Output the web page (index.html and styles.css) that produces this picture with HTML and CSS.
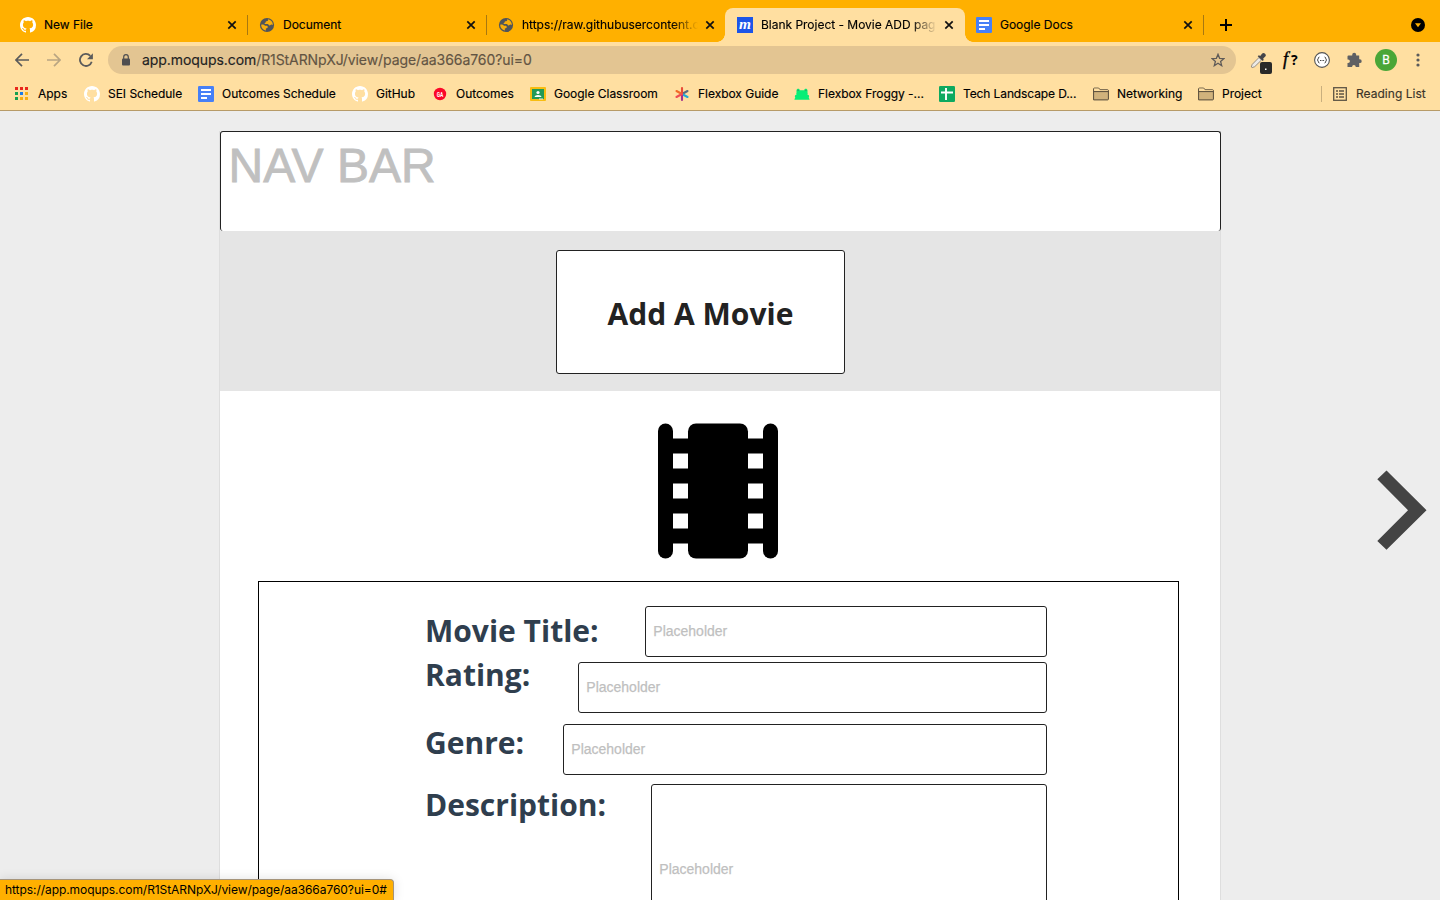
FILE: index.html
```html
<!DOCTYPE html>
<html lang="en">
<head>
<meta charset="utf-8">
<title>Blank Project - Movie ADD page</title>
<link rel="stylesheet" href="styles.css">
</head>
<body>
<svg class="defs" width="0" height="0">
  <symbol id="github" viewBox="0 0 16 16"><path fill="#fff" d="M8 0C3.58 0 0 3.58 0 8c0 3.54 2.29 6.53 5.47 7.59.4.07.55-.17.55-.38 0-.19-.01-.82-.01-1.49-2.01.37-2.53-.49-2.69-.94-.09-.23-.48-.94-.82-1.13-.28-.15-.68-.52-.01-.53.63-.01 1.08.58 1.23.82.72 1.21 1.87.87 2.33.66.07-.52.28-.87.51-1.07-1.78-.2-3.64-.89-3.64-3.95 0-.87.31-1.59.82-2.15-.08-.2-.36-1.02.08-2.12 0 0 .67-.21 2.2.82.64-.18 1.32-.27 2-.27s1.36.09 2 .27c1.53-1.04 2.2-.82 2.2-.82.44 1.1.16 1.92.08 2.12.51.56.82 1.27.82 2.15 0 3.07-1.87 3.75-3.65 3.95.29.25.54.73.54 1.48 0 1.07-.01 1.93-.01 2.2 0 .21.15.46.55.38A8.01 8.01 0 0 0 16 8c0-4.42-3.58-8-8-8z"/></symbol>
  <symbol id="globe" viewBox="0 0 16 16"><circle cx="8" cy="8" r="7.1" fill="#50545a"/><path fill="#f7ae0b" d="M8.8 2.300c1 1.200-.2 1.900-1.400 2-.9.200-.5 1.500-1.500 1.700-.6.200-.5.900.2 1h2.500c1 0 1.100 1.500 2 1.500s1-1 2-.9c.5 0 1 .3 1.200.700.3-3.100-1.900-5.700-5-6zM2.200 7.700c-.1 2.800 1.800 5.300 4.700 5.700l-.1-1.600c.2-.8 1.300-.5 1.800-1.100.5-.8 0-1.700-.9-1.900-.8-.2-1.300.1-2-.3-.8-.5-1.500-1.200-3.500-.8z"/></symbol>
  <symbol id="docs" viewBox="0 0 16 16"><rect width="16" height="16" rx="1.3" fill="#4680f7"/><path d="M3 4h10M3 8h10M3 12h6" stroke="#fff" stroke-width="1.8"/></symbol>
  <symbol id="folder" viewBox="0 0 16 14"><path d="M.6 12.900V1.900q0-.8.800-.8h4.300l1.500 1.700h7.400q.8 0 .8.800v8.500q0 .8-.8.800z" fill="#d0b27c" stroke="#554a3a"/><path d="M1.100 1.600h4.400l1.500 1.700h7.900v1H1.100z" fill="#ffdfa1"/><path d="M.6 4.600h14.800" stroke="#554a3a"/></symbol>
  <symbol id="close" viewBox="0 0 10 10"><path d="M1.300 1.300l7.400 7.400M8.700 1.300L1.300 8.700" stroke="#111" stroke-width="1.700"/></symbol>
</svg>

<header class="browser">
  <div class="tabs">
    <div class="tab"><svg class="fav"><use href="#github"/></svg><span class="tab-title">New File</span><svg class="x"><use href="#close"/></svg></div>
    <div class="tab ruled"><svg class="fav"><use href="#globe"/></svg><span class="tab-title">Document</span><svg class="x"><use href="#close"/></svg></div>
    <div class="tab ruled"><svg class="fav"><use href="#globe"/></svg><span class="tab-title faded">https://raw.githubusercontent.c</span><svg class="x"><use href="#close"/></svg></div>
    <div class="tab active"><svg class="fav" viewBox="0 0 16 16"><rect width="16" height="16" fill="#1c55e8"/><text x="8" y="11.500" text-anchor="middle" class="m-logo" textLength="12" lengthAdjust="spacingAndGlyphs">m</text></svg><span class="tab-title faded">Blank Project - Movie ADD pag</span><svg class="x"><use href="#close"/></svg></div>
    <div class="tab last"><svg class="fav"><use href="#docs"/></svg><span class="tab-title">Google Docs</span><svg class="x"><use href="#close"/></svg></div>
    <svg class="plus" viewBox="0 0 12 12"><path d="M6 0v12M0 6h12" stroke="#000" stroke-width="2"/></svg>
    <svg class="tabsearch" viewBox="0 0 14 14"><circle cx="7" cy="7" r="7"/><path d="M4 5.300h6L7 9.300z" fill="#ffb000"/></svg>
  </div>

  <div class="toolbar">
    <svg class="nav back" viewBox="0 0 14 14"><path d="M14 7H1.500M7 .8L.9 7 7 13.200" fill="none" stroke="#5b5b5b" stroke-width="1.700"/></svg>
    <svg class="nav fwd" viewBox="0 0 14 14"><path d="M0 7h12.500M7 .8L13.100 7 7 13.200" fill="none" stroke="#b9a582" stroke-width="1.700"/></svg>
    <svg class="nav reload" viewBox="0 0 14 14"><path d="M12.700 8.700A6 6 0 1 1 11.300 2.800" fill="none" stroke="#5b5b5b" stroke-width="1.800"/><path d="M13.900.2v6H8z" fill="#5b5b5b"/></svg>
    <div class="address">
      <svg class="lock" viewBox="0 0 8 12"><rect y="4.500" width="8" height="7" rx="1" fill="#4f4e50"/><path d="M1.700 5V3a2.300 2.300 0 0 1 4.600 0v2" fill="none" stroke="#4f4e50" stroke-width="1.200"/></svg>
      <span class="url"><b>app.moqups.com</b>/R1StARNpXJ/view/page/aa366a760?ui=0</span>
      <svg class="star" viewBox="0 0 14 14"><path d="M7 1.300l1.600 4 4.400.3-3.400 2.800 1.100 4.300L7 10.300l-3.700 2.400 1.100-4.300L1 5.600l4.400-.3z" fill="none" stroke="#5f5b58" stroke-width="1.300"/></svg>
    </div>
    <svg class="dropper" viewBox="0 0 22 22"><path d="M1.300 15l.9-2.600L9 5.500l2.500 2.500-6.800 6.700-2.600.9z" fill="#eceae6" stroke="#8a857c" stroke-width=".9"/><path d="M7.700 4.300l1.200-1 1.300.6 2-2.300c1.500-1.800 4.700.8 3.300 2.700l-2.300 2.200.5 1.500-1 1.100z" fill="#454549"/><rect x="10" y="10" width="12" height="12" rx="2" fill="#292929"/><rect x="15" y="16.500" width="1.500" height="1.500" fill="#fff"/></svg>
    <span class="fq"><i>f</i>?</span>
    <svg class="braces" viewBox="0 0 16 16"><circle cx="8" cy="8" r="7.400" fill="#fff" stroke="#545454" stroke-width="1.100"/><path d="M5.400 5C3.800 5 4.800 7.700 3.300 8c1.500.3.500 3 2.100 3M10.600 5c1.600 0 .6 2.700 2.100 3-1.500.3-.5 3-2.100 3" fill="none" stroke="#333"/><path d="M6 8.500h.9M7.600 8.500h.9M9.200 8.500h.9" stroke="#333" stroke-width="1"/></svg>
    <svg class="puzzle" viewBox="0 0 16 16"><path fill="#5f6063" d="M2.500 3.500h3.700v-.7a2 2 0 0 1 4 0v.7h3v3.800h.6a1.900 1.900 0 0 1 0 3.800h-.6v4H9.700v-.4a1.800 1.800 0 0 0-3.600 0v.4H1.500v-4h.6a1.800 1.800 0 0 0 0-3.600h-.6v-3q0-1 1-1z"/></svg>
    <span class="avatar">B</span>
    <svg class="kebab" viewBox="0 0 4 14"><g fill="#5b5b5b"><circle cx="2" cy="2" r="1.600"/><circle cx="2" cy="7" r="1.600"/><circle cx="2" cy="12" r="1.600"/></g></svg>
  </div>

  <nav class="bookmarks">
    <a class="bm w70"><svg viewBox="0 0 16 16"><path d="M1 2.500h3M6 2.500h3M11 2.500h3" stroke="#e8261c" stroke-width="3"/><path d="M1 7.500h3" stroke="#17a050" stroke-width="3"/><path d="M6 7.500h3" stroke="#1a7bea" stroke-width="3"/><path d="M11 7.500h3M6 12.500h3M11 12.500h3" stroke="#f8ae12" stroke-width="3"/><path d="M1 12.500h3" stroke="#17a050" stroke-width="3"/></svg>Apps</a>
    <a class="bm w114"><svg><use href="#github"/></svg>SEI Schedule</a>
    <a class="bm w154"><svg><use href="#docs"/></svg>Outcomes Schedule</a>
    <a class="bm w80"><svg><use href="#github"/></svg>GitHub</a>
    <a class="bm w98"><svg viewBox="0 0 16 16"><circle cx="8" cy="8" r="6.200" fill="#fb0729"/><text x="8" y="11.300" text-anchor="middle" class="ga" textLength="6.500" lengthAdjust="spacingAndGlyphs">GA</text></svg>Outcomes</a>
    <a class="bm w144"><svg viewBox="0 0 16 16"><rect y="1" width="16" height="14" rx="1" fill="#f8bd11"/><rect x="2" y="3" width="12" height="10" fill="#229a58"/><circle cx="8" cy="6.500" r="1.600" fill="#fff"/><path d="M4.500 11c.3-2.800 6.700-2.800 7 0z" fill="#fff"/><path d="M9 13h4" stroke="#eee"/></svg>Google Classroom</a>
    <a class="bm w120"><svg viewBox="0 0 16 16" stroke-width="2.100" stroke-linecap="round"><path d="M8 8l5.500-3" stroke="#596b80"/><path d="M8 8l5.500 3" stroke="#20a9d8"/><path d="M8 8v6" stroke="#a3308d"/><path d="M8 8V2" stroke="#e94c38"/><path d="M8 8L2.500 5" stroke="#f06b27"/><path d="M8 8l-5.500 3" stroke="#f04c52"/></svg>Flexbox Guide</a>
    <a class="bm w145"><svg viewBox="0 0 16 16"><path fill="#08ee76" d="M2.500 4.500c0-2.200 3-2.300 3.300-.3h4.400c.3-2 3.300-1.900 3.300.3v2.700c.5.400.3 1-.2 1.500 1.900-.2 2.300 1.800 1.400 3l.8 1.300v.8H.5V13l.8-1.300c-.9-1.200-.5-3.200 1.400-3-.5-.5-.7-1.100-.2-1.500z"/><path d="M3.500 4.300h1.200M11.300 4.300h1.200" stroke="#397c69"/></svg>Flexbox Froggy -...</a>
    <a class="bm w154"><svg viewBox="0 0 16 16"><rect width="16" height="16" rx="1.300" fill="#0da960"/><path d="M2 6.500h12M7 2v12" stroke="#fff" stroke-width="1.900"/></svg><span class="tight">Tech Landscape D...</span></a>
    <a class="bm w105"><svg><use href="#folder"/></svg>Networking</a>
    <a class="bm w70"><svg><use href="#folder"/></svg>Project</a>
    <a class="bm reading"><svg viewBox="0 0 16 16"><rect x="1.700" y="1.700" width="12.600" height="12.600" fill="none" stroke="#5d5444" stroke-width="1.300"/><path d="M4 5h2M4 8h2M4 11h2M7 5h5M7 8h5M7 11h5" stroke="#5d5444" stroke-width="1.300"/></svg>Reading List</a>
  </nav>
</header>

<main class="stage">
  <section class="page">
    <div class="navbar">NAV BAR</div>
    <div class="banner"><div class="heading">Add A Movie</div></div>
    <svg class="film" viewBox="0 0 120 136"><rect y=".5" width="15" height="135" rx="7.500"/><rect x="105" y=".5" width="15" height="135" rx="7.500"/><rect x="30" y=".5" width="60" height="135" rx="8"/><path d="M8 15.500h104v15H8zM8 45.500h104v15H8zM8 75.500h104v15H8zM8 105.500h104v15H8z"/></svg>
    <form class="form">
      <div class="row title"><label>Movie Title:</label><div class="field">Placeholder</div></div>
      <div class="row rating"><label>Rating:</label><div class="field">Placeholder</div></div>
      <div class="row genre"><label>Genre:</label><div class="field">Placeholder</div></div>
      <div class="row description"><label>Description:</label><div class="field">Placeholder</div></div>
    </form>
  </section>
  <svg class="next" viewBox="0 0 50 80"><path d="M.3 9.300L9.500.5 49.500 40.200 9.500 79.800.3 71 31 40.200z" fill="#444"/></svg>
</main>
<div class="status">https://app.moqups.com/R1StARNpXJ/view/page/aa366a760?ui=0#</div>
</body>
</html>
```
FILE: styles.css
```css
* { box-sizing: border-box; }
body { margin: 0; width: 1440px; height: 900px; overflow: hidden; display: flex; flex-direction: column; background: #ededed; font-family: Inter, "Liberation Sans", sans-serif; font-size: 12px; color: #000; }
svg { display: block; flex: none; }
.defs { position: absolute; }

.browser { flex: none; height: 111px; background: #ffdfa1; border-bottom: 1px solid #b79b68; }
.tabs { height: 42px; padding: 8px 15px 0 8px; display: flex; background: #ffb000; }
.tab { width: 239px; height: 34px; padding-left: 12px; display: flex; align-items: center; position: relative; }
.tab.active { width: 240px; margin-right: -1px; background: #ffdfa1; border-radius: 8px 8px 0 0; }
.tab.active::before, .tab.active::after { content: ""; position: absolute; bottom: 0; width: 8px; height: 8px; }
.tab.active::before { left: -8px; background: radial-gradient(circle at 0 0, #ffb000 7.5px, #ffdfa1 8px); }
.tab.active::after { right: -8px; background: radial-gradient(circle at 100% 0, #ffb000 7.5px, #ffdfa1 8px); }
.tab.ruled::before, .tab.last::after { content: ""; position: absolute; left: 0; top: 7px; width: 1px; height: 20px; background: #a87810; }
.tab.last::after { left: auto; right: -1px; }
.fav { width: 16px; height: 16px; margin-right: 8px; }
.tab-title { width: 183px; white-space: nowrap; letter-spacing: -.02px; line-height: 18px; -webkit-text-stroke: .15px; }
.faded { -webkit-mask-image: linear-gradient(90deg, #000 150px, transparent 176px); mask-image: linear-gradient(90deg, #000 150px, transparent 176px); }
.x { width: 10px; height: 10px; }
.m-logo { font: italic 700 15px "Liberation Serif", serif; fill: #fff; }
.plus { width: 12px; height: 12px; margin: 11px 0 0 17px; }
.tabsearch { width: 14px; height: 14px; margin: 10px 0 0 auto; }

.toolbar { height: 36px; padding-left: 15px; display: flex; align-items: center; }
.nav { width: 14px; height: 14px; }
.fwd { margin-left: 18px; }
.reload { margin-left: 18px; }
.address { width: 1128px; height: 28px; margin-left: 15px; padding: 0 11px 0 14px; display: flex; align-items: center; background: #e3c592; border-radius: 14px; }
.lock { width: 8px; height: 12px; }
.url { margin: -1px 0 0 12px; font-size: 14px; letter-spacing: -.075px; color: #625443; -webkit-text-stroke: .15px; }
.url b { font-weight: 400; color: #222; }
.star { width: 14px; height: 14px; margin-left: auto; }
.dropper { width: 22px; height: 22px; margin: 5px 0 0 14px; }
.fq { width: 18px; margin: -2px 0 0 11px; font: 700 14px "Open Sans", sans-serif; color: #000; white-space: nowrap; }
.fq i { font: italic 400 18px "Liberation Serif", serif; -webkit-text-stroke: .4px; margin-right: 3px; }
.braces { width: 16px; height: 16px; margin-left: 13px; }
.puzzle { width: 16px; height: 16px; margin-left: 16px; }
.avatar { width: 22px; height: 22px; margin-left: 13px; border-radius: 50%; background: #4aa637; color: #fff; line-height: 22px; text-align: center; font-size: 11.500px; -webkit-text-stroke: .3px; }
.kebab { width: 4px; height: 14px; margin-left: 19px; }

.bookmarks { height: 32px; padding: 0 14px; display: flex; align-items: center; }
.bm { display: flex; align-items: center; flex: none; white-space: nowrap; letter-spacing: -.03px; line-height: 18px; -webkit-text-stroke: .15px; }
.bm svg { width: 16px; height: 16px; margin-right: 8px; }
.tight { letter-spacing: -.11px; }
.ga { font: 700 8px Roboto, sans-serif; fill: #fff; }
.w70 { width: 70px; } .w80 { width: 80px; } .w98 { width: 98px; } .w105 { width: 105px; } .w114 { width: 114px; } .w120 { width: 120px; } .w144 { width: 144px; } .w145 { width: 145px; } .w154 { width: 154px; }
.reading { width: 105px; margin-left: auto; height: 16px; padding-left: 10px; border-left: 1px solid #c9af7e; color: #3b342a; letter-spacing: .03px; }

.stage { height: 789px; padding-top: 20px; position: relative; overflow: hidden; }
.page { width: 1002px; height: 769px; margin-left: 219px; border: 1px solid #dedede; border-width: 0 1px; background: #fff; }
.navbar { width: 1001px; height: 100px; padding: 6px 7.500px; background: #fff; border: 1px solid #222; border-bottom: 0; border-radius: 3px; font: 48px/55px "Liberation Sans", sans-serif; color: #c0c0c0; -webkit-text-stroke: .8px; }
.banner { height: 160px; padding: 19px 0 0 336px; background: #e5e5e5; }
.heading { width: 289px; height: 124px; padding-top: 2px; display: flex; align-items: center; justify-content: center; background: #fff; border: 1px solid #222; border-radius: 3px; font: 700 30px "Open Sans", sans-serif; color: #222; }
.film { width: 120px; height: 136px; margin: 32px 0 0 438px; }
.form { width: 921px; height: 340px; margin: 22px 0 0 38px; padding: 24px 131px 0 166px; border: 1px solid #000; }
.row { display: flex; height: 51px; }
.row label { flex: none; font: 700 30px/50px "Open Sans", sans-serif; color: #2f3e4e; }
.field { flex: 1; padding-left: 7.300px; border: 1px solid #222; border-radius: 3px; font: 14px/49px "Liberation Sans", sans-serif; color: #bfbfbf; -webkit-text-stroke: .25px; }
.title label { width: 220px; }
.rating { margin-top: 5px; }
.rating label { width: 153px; line-height: 26px; }
.genre { margin-top: 11px; }
.genre label { width: 138px; line-height: 38px; }
.description { margin-top: 9px; height: 172px; }
.description label { width: 226px; line-height: 42px; }
.description .field { line-height: 168px; }
.next { position: absolute; left: 1377px; top: 359px; width: 50px; height: 80px; }
.status { position: absolute; left: 0; bottom: 0; width: 394px; height: 21px; padding-left: 5px; background: #ffb000; border: solid #a5947a; border-width: 1px 1px 0 0; border-radius: 0 4px 0 0; line-height: 20px; letter-spacing: -.06px; white-space: nowrap; box-shadow: 0 0 12px rgba(0,0,0,.12); }
```
